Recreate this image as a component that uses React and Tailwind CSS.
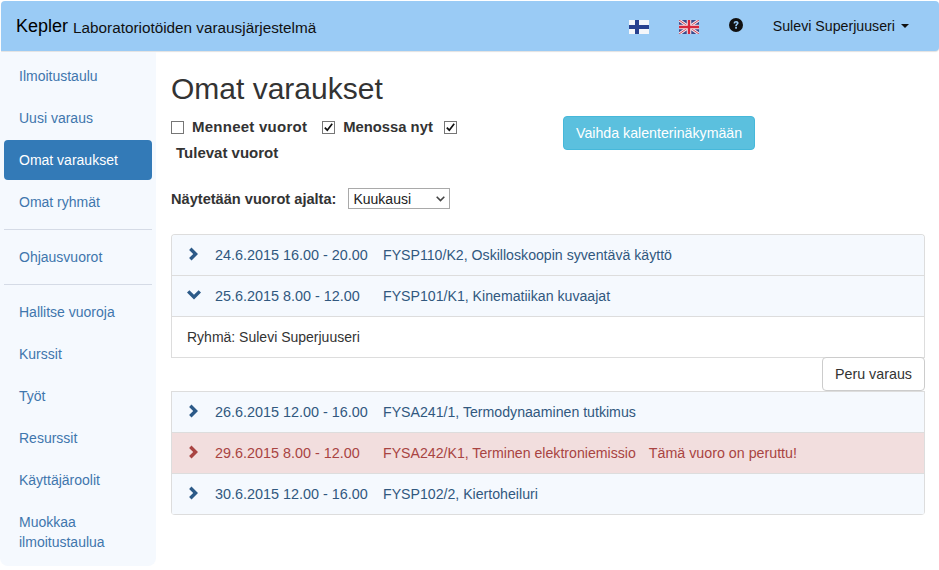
const nav1 = ["Ilmoitustaulu", "Uusi varaus", "Omat varaukset", "Omat ryhmät"];
const nav3 = ["Hallitse vuoroja", "Kurssit", "Työt", "Resurssit", "Käyttäjäroolit"];

function NavItem({ label, active }) {
  return (
    <div className={`mx-1 mb-[2px] rounded-[4px] px-[15px] py-[10px] ${active ? "bg-[#337ab7] text-white" : "text-[#3f76ad]"}`}>{label}</div>
  );
}

function Divider() {
  return <div className="mx-1 mt-[7px] mb-[7px] h-px bg-[#d5dbe6]" />;
}

function Chevron({ down, color }) {
  return (
    <svg width="14" height="14" viewBox="0 0 14 14" className="shrink-0" fill={color}>
      {down
        ? <path d="M0 4.6 L2.4 2.2 L7 6.8 L11.6 2.2 L14 4.6 L7 11.4 Z" />
        : <path d="M3 0.5 L9.5 7 L3 13.5 L0.6 11.1 L4.7 7 L0.6 2.9 Z" transform="translate(1.5 0)" />}
    </svg>
  );
}

function Row({ date, text, down, danger, note }) {
  return (
    <div className={`flex h-[41px] items-center border-b border-[#ddd] pl-[15px] text-[14.15px] ${danger ? "bg-[#f2dede] text-[#a94442]" : "bg-[#f5f9fe] text-[#31587f]"}`}>
      <div className="-mt-[3px] w-[28px]"><Chevron down={down} color={danger ? "#a94442" : "#2c5a88"} /></div>
      <span className="w-[168px] text-[14.4px]">{date}</span>
      <span>{text}</span>
      {note && <span className="ml-[13px] text-[14.25px]">{note}</span>}
    </div>
  );
}

function Check({ on }) {
  return (
    <span className="flex h-[13px] w-[13px] shrink-0 items-center justify-center border border-[#767676] bg-white">
      {on && (
        <svg width="11" height="11" viewBox="0 0 11 11" fill="none" stroke="#111" strokeWidth="1.7">
          <path d="M1.8 5.6 L4.3 8.2 L9.2 1.8" />
        </svg>
      )}
    </span>
  );
}

function FlagFi() {
  return (
    <svg width="20" height="14" viewBox="0 0 20 14" className="blur-[0.5px]">
      <rect width="20" height="14" fill="#f4f6fa" />
      <rect x="6" width="4" height="14" fill="#27408f" />
      <rect y="5" width="20" height="4" fill="#27408f" />
    </svg>
  );
}

function FlagUk() {
  return (
    <svg width="20" height="14" viewBox="0 0 20 14" className="blur-[0.4px]">
      <rect width="20" height="14" fill="#3b4a8c" />
      <path d="M0 0 L20 14 M20 0 L0 14" stroke="#f2e6ea" strokeWidth="3" />
      <path d="M0 0 L20 14 M20 0 L0 14" stroke="#d1445a" strokeWidth="1" />
      <path d="M10 0 V14 M0 7 H20" stroke="#f2e6ea" strokeWidth="4.5" />
      <path d="M10 0 V14 M0 7 H20" stroke="#d8283c" strokeWidth="2.4" />
    </svg>
  );
}

function Help() {
  return (
    <svg width="14" height="14" viewBox="0 0 14 14">
      <circle cx="7" cy="7" r="7" fill="#111" />
      <path d="M4.6 5.4 C4.7 3.8 5.7 3 7.1 3 C8.6 3 9.6 3.9 9.6 5.1 C9.6 6.6 7.8 6.7 7.8 8.2 H6.2 C6.2 6.2 7.8 6.1 7.8 5.2 C7.8 4.7 7.5 4.5 7 4.5 C6.5 4.5 6.2 4.8 6.1 5.5 Z" fill="#9acbf5" />
      <rect x="6.2" y="9" width="1.7" height="1.7" fill="#9acbf5" />
    </svg>
  );
}

export default function App() {
  return (
    <div className="h-[570px] w-[939px] overflow-hidden bg-white pt-px text-[14px] leading-[20px] text-[#333] font-['Liberation_Sans',Arial,sans-serif]">
      <header className="ml-px flex h-[50px] items-center rounded-t-[4px] rounded-br-[4px] bg-[#9acbf5] text-[#111] shadow-[0_1px_1px_rgba(0,0,0,0.12)]">
        <span className="ml-[15px] text-[18px] leading-[20px] text-black">Kepler</span>
        <span className="mt-[3px] ml-[5px] text-[15.3px] text-[#111]">Laboratoriotöiden varausjärjestelmä</span>
        <div className="ml-auto mr-[30px] flex items-center">
          <span className="mt-[2px]"><FlagFi /></span>
          <span className="mt-[2px] ml-[30px]"><FlagUk /></span>
          <span className="-mt-[2px] ml-[30px]"><Help /></span>
          <span className="ml-[30px] text-[14.2px]">Sulevi Superjuuseri</span>
          <span className="ml-[6px] h-0 w-0 border-x-[4px] border-t-[4px] border-x-transparent border-t-[#111]" />
        </div>
      </header>
      <div className="flex">
        <aside className="mt-px h-[514px] w-[156px] shrink-0 rounded-b-[8px] bg-[#f5f9fe] pt-[3px]">
          <div className="pt-px">
            {nav1.map((n, i) => <NavItem key={n} label={n} active={i === 2} />)}
          </div>
          <Divider />
          <NavItem label="Ohjausvuorot" />
          <Divider />
          {nav3.map((n) => <NavItem key={n} label={n} />)}
          <div className="mx-1 px-[15px] py-[10px] text-[#3f76ad]">Muokkaa<br />ilmoitustaulua</div>
        </aside>
        <main className="ml-[15px] w-[754px] shrink-0">
          <h1 className="mt-[21px] text-[30px] leading-[33px] font-normal text-[#333]">Omat varaukset</h1>
          <div className="mt-[12px] flex items-start">
            <div className="w-[392px]">
              <div className="flex h-[20px] items-center text-[15px] font-bold">
                <Check />
                <span className="ml-[8px] tracking-[0.25px]">Menneet vuorot</span>
                <span className="ml-[15px]"><Check on /></span>
                <span className="ml-[8px] text-[14.8px]">Menossa nyt</span>
                <span className="ml-[11px]"><Check on /></span>
              </div>
              <div className="mt-[6px] pl-[5px] text-[15px] font-bold">Tulevat vuorot</div>
            </div>
            <button className="-mt-px h-[34px] rounded-[4px] border border-[#46b8da] bg-[#5bc0de] px-[12px] text-[14.2px] text-white">Vaihda kalenterinäkymään</button>
          </div>
          <div className="mt-[25px] flex h-[22px] items-center">
            <span className="text-[14.6px] font-bold">Näytetään vuorot ajalta:</span>
            <div className="-mt-px ml-[12px] flex h-[21px] w-[102px] items-center justify-between border border-[#a9a9a9] bg-white pr-[4px] pl-[4px]">
              <span className="text-[#222]">Kuukausi</span>
              <svg width="9" height="6" viewBox="0 0 9 6" fill="none" stroke="#444" strokeWidth="1.6"><path d="M0.7 0.8 L4.5 4.6 L8.3 0.8" /></svg>
            </div>
          </div>
          <section className="mt-[24px] overflow-hidden rounded-t-[4px] border-x border-t border-[#ddd]">
            <Row date="24.6.2015 16.00 - 20.00" text="FYSP110/K2, Oskilloskoopin syventävä käyttö" />
            <Row date="25.6.2015 8.00 - 12.00" text="FYSP101/K1, Kinematiikan kuvaajat" down />
            <div className="flex h-[41px] items-center border-b border-[#ddd] bg-white pl-[15px] text-[#333]">Ryhmä: Sulevi Superjuuseri</div>
          </section>
          <div className="-mt-px flex justify-end">
            <button className="relative h-[34px] rounded-[4px] border border-[#ccc] bg-white px-[12px] text-[14.3px] text-[#333]">Peru varaus</button>
          </div>
          <section className="overflow-hidden rounded-b-[4px] border-x border-t border-[#ddd]">
            <Row date="26.6.2015 12.00 - 16.00" text="FYSA241/1, Termodynaaminen tutkimus" />
            <Row date="29.6.2015 8.00 - 12.00" text="FYSA242/K1, Terminen elektroniemissio" danger note="Tämä vuoro on peruttu!" />
            <Row date="30.6.2015 12.00 - 16.00" text="FYSP102/2, Kiertoheiluri" />
          </section>
        </main>
      </div>
    </div>
  );
}
